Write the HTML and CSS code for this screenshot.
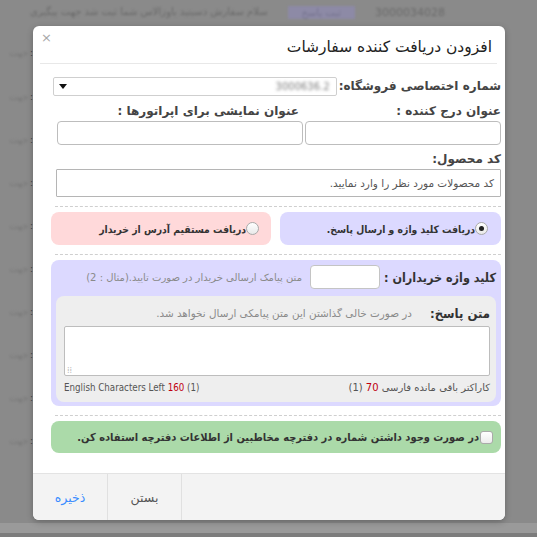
FILE: index.html
```html
<!DOCTYPE html>
<html lang="fa">
<head>
<meta charset="utf-8">
<title>افزودن دریافت کننده سفارشات</title>
<link rel="stylesheet" href="styles.css">
</head>
<body>
<div class="backdrop">
  <div class="bg-row bg-top">
    <span class="bg-num">3000034028</span>
    <span class="bg-pill">ثبت پاسخ</span>
    <span class="bg-text">سلام سفارش دسبتید باوزالاس شما ثبت شد جهت پیگیری</span>
  </div>
  <div class="bg-row"><span class="bg-faint">جهت</span><span class="bg-dots">:</span></div>
  <div class="bg-row"><span class="bg-faint">جهت</span><span class="bg-dots">:</span></div>
  <div class="bg-row"><span class="bg-faint">جهت</span><span class="bg-dots">:</span></div>
  <div class="bg-row"><span class="bg-faint">جهت</span><span class="bg-dots">:</span></div>
  <div class="bg-row"><span class="bg-faint">جهت</span><span class="bg-dots">:</span></div>
  <div class="bg-row"><span class="bg-faint">جهت</span><span class="bg-dots">:</span></div>
  <div class="bg-row"><span class="bg-faint">جهت</span><span class="bg-dots">:</span></div>
  <div class="bg-row"><span class="bg-faint">جهت</span><span class="bg-dots">:</span></div>
  <div class="bg-row"><span class="bg-faint">جهت</span><span class="bg-dots">:</span></div>
  <div class="bg-row"><span class="bg-faint">جهت</span><span class="bg-dots">:</span></div>
  <div class="bg-bottom"></div>
</div>

<div class="modal" dir="rtl">
  <div class="modal-header">
    <span class="close">×</span>
    <h4 class="title">افزودن دریافت کننده سفارشات</h4>
  </div>

  <div class="modal-body">
    <div class="row-store">
      <label class="lbl">شماره اختصاصی فروشگاه:</label>
      <div class="select">
        <span class="select-val">3000636.2</span>
        <span class="select-arrow"></span>
      </div>
    </div>

    <div class="row-two">
      <div class="col">
        <label class="lbl">عنوان درج کننده :</label>
        <div class="input"></div>
      </div>
      <div class="col">
        <label class="lbl">عنوان نمایشی برای اپراتورها :</label>
        <div class="input"></div>
      </div>
    </div>

    <label class="lbl lbl-code">کد محصول:</label>
    <div class="input input-code"><span class="ph">کد محصولات مورد نظر را وارد نمایید.</span></div>

    <div class="dash"></div>

    <div class="choices">
      <div class="choice choice-purple">
        <span class="radio checked"></span>
        <span class="choice-text radio-text">دریافت کلید واژه و ارسال پاسخ.</span>
      </div>
      <div class="choice choice-pink">
        <span class="radio"></span>
        <span class="choice-text radio-text">دریافت مستقیم آدرس از خریدار</span>
      </div>
    </div>

    <div class="dash"></div>

    <div class="keyword-box">
      <div class="kw-row">
        <span class="kw-label">کلید واژه خریداران :</span>
        <div class="input kw-input"></div>
        <span class="hint">متن پیامک ارسالی خریدار در صورت تایید.(مثال : 2)</span>
      </div>
      <div class="reply-box">
        <div class="reply-head">
          <span class="reply-label">متن پاسخ:</span>
          <span class="hint hint-reply">در صورت خالی گذاشتن این متن پیامکی ارسال نخواهد شد.</span>
        </div>
        <div class="textarea"><span class="grip">⁞⁞</span></div>
        <div class="counters">
          <span class="cnt">کاراکتر باقی مانده فارسی <b class="red">70</b> (1)</span>
          <span class="cnt cnt-en" dir="ltr">English Characters Left <b class="red">160</b> (1)</span>
        </div>
      </div>
    </div>

    <div class="dash"></div>

    <div class="green-box">
      <span class="checkbox"></span>
      <span class="choice-text">در صورت وجود داشتن شماره در دفترچه مخاطبین از اطلاعات دفترچه استفاده کن.</span>
    </div>
  </div>

  <div class="modal-footer">
    <span class="btn btn-save">ذخیره</span>
    <span class="btn btn-close">بستن</span>
  </div>
</div>
</body>
</html>
```

FILE: styles.css
```css
* { box-sizing: border-box; }

html, body {
  margin: 0;
  padding: 0;
  width: 537px;
  height: 537px;
  overflow: hidden;
}

body {
  background: #8a8a8a;
  font-family: "DejaVu Sans", sans-serif;
  position: relative;
}

/* ---------- backdrop page (dimmed) ---------- */
.backdrop {
  display: flex;
  flex-direction: column;
  height: 537px;
}

.bg-row {
  height: 43px;
  display: flex;
  align-items: center;
  padding: 0 0 0 2px;
  font-size: 10px;
  color: #6e6e6e;
  flex-shrink: 0;
  gap: 2px;
}

.bg-row:nth-child(2) { height: 45px; }

.bg-top {
  direction: rtl;
  height: 30px;
  align-items: flex-start;
  padding: 6px 92px 0 0;
  gap: 20px;
  filter: blur(0.9px);
}

.bg-text { color: #6a6a6a; font-size: 10px; }
.bg-pill {
  background: #8d8aa6;
  color: #76748f;
  padding: 1px 14px;
  font-size: 10px;
}
.bg-num { color: #6a6a6a; font-size: 11px; }

.bg-dots {
  color: #444;
  font-size: 9px;
}

.bg-faint {
  width: 26px;
  color: #787878;
  font-size: 9px;
  filter: blur(0.8px);
  text-align: right;
}

.bg-bottom {
  margin-top: auto;
  height: 14px;
  background: #9a9a9a;
  border-bottom: 4px solid #7c7c7c;
}

/* ---------- modal ---------- */
.modal {
  position: absolute;
  left: 33px;
  top: 26px;
  width: 472px;
  height: 494px;
  background: #fff;
  border-radius: 6px;
  display: flex;
  flex-direction: column;
  overflow: hidden;
  box-shadow: 0 2px 6px rgba(0,0,0,0.25);
  color: #333;
}

.modal-header {
  margin: 0 8px 0 7px;
  padding: 9px 5px 3px;
  border-bottom: 1px solid #e8e8e8;
  position: relative;
}

.close {
  position: absolute;
  left: 1px;
  top: 5px;
  color: #a8a8a8;
  font-size: 13px;
  line-height: 14px;
}

.title {
  margin: 0;
  font-weight: normal;
  font-size: 15.5px;
  line-height: 25px;
  color: #222;
}

.modal-body {
  padding: 11px 4px 0 18px;
  flex: 1;
}

.lbl {
  display: block;
  font-weight: bold;
  font-size: 12px;
  line-height: 16px;
  color: #444;
  white-space: nowrap;
}

.row-store {
  display: flex;
  align-items: center;
  gap: 2px;
  height: 22px;
}

.select {
  width: 284px;
  height: 19px;
  border: 1px solid #cfcfcf;
  border-radius: 2px;
  display: flex;
  justify-content: space-between;
  align-items: center;
  padding: 0 6px 0 5px;
  background: #fff;
}

.select-val {
  font-size: 10px;
  color: #7d7d7d;
  filter: blur(1.4px);
  direction: ltr;
}

.select-arrow {
  width: 0;
  height: 0;
  border-left: 4px solid transparent;
  border-right: 4px solid transparent;
  border-top: 5px solid #111;
}

.row-two {
  display: flex;
  gap: 2px;
  margin-top: 5px;
  margin-left: 6px;
}

.row-two .col {
  display: flex;
  flex-direction: column;
}
.row-two .col:first-child { width: 196px; }
.row-two .col:last-child { flex: 1; }
.row-two .col .lbl { line-height: 18px; }
.row-two .col:last-child .lbl { padding-right: 4px; }

.input {
  height: 24px;
  border: 1px solid #bdbdbd;
  border-radius: 4px;
  background: #fff;
}
.row-two .input { margin-top: 1px; }

.lbl-code {
  margin-top: 5px;
  line-height: 18px;
}

.input-code {
  height: 28px;
  margin-top: 1px;
  margin-left: 5px;
  border-radius: 1px;
  border-color: #b5b5b5;
  display: flex;
  align-items: center;
  padding-right: 6px;
}

.ph {
  font-size: 10.5px;
  color: #555;
}

.dash {
  border-top: 1px dashed #cfcfcf;
  margin: 9px 0 5px 4px;
}

.choices {
  display: flex;
  gap: 9px;
}

.choice {
  flex: 1;
  height: 33px;
  border-radius: 8px;
  display: flex;
  align-items: center;
  padding-right: 13px;
}

.choice-purple { background: #dcd9ff; }
.choice-pink { background: #ffd9da; padding-right: 12px; }

.radio {
  width: 13px;
  height: 13px;
  border-radius: 50%;
  border: 1px solid #a9a9a9;
  background: linear-gradient(#fff, #e9e9e9);
  position: relative;
  flex-shrink: 0;
}

.radio.checked::after {
  content: "";
  position: absolute;
  left: 3px;
  top: 3px;
  width: 5px;
  height: 5px;
  border-radius: 50%;
  background: #222;
}

.choice-text {
  font-family: "DejaVu Sans Condensed", "DejaVu Sans", sans-serif;
  font-stretch: condensed;
  font-size: 11px;
  font-weight: bold;
  color: #333;
  white-space: nowrap;
}

.radio-text { font-size: 10.3px; }

.keyword-box {
  background: #dcd9ff;
  border-radius: 8px;
  padding: 5px;
  height: 146px;
}

.kw-row {
  display: flex;
  align-items: center;
  height: 24px;
}

.kw-label {
  font-family: "DejaVu Sans Condensed", "DejaVu Sans", sans-serif;
  font-stretch: condensed;
  font-size: 12.5px;
  font-weight: bold;
  color: #333;
  white-space: nowrap;
}

.kw-input {
  width: 70px;
  height: 24px;
  margin-right: 4px;
  border-color: #c4c4c4;
}

.hint {
  font-size: 10px;
  color: #8a8a8a;
  white-space: nowrap;
  margin-right: 8px;
}

.reply-box {
  margin-top: 7px;
  background: #eeeeee;
  border-radius: 8px;
  padding: 8px 6px 6px 8px;
  height: 106px;
}

.reply-head {
  display: flex;
  align-items: center;
  height: 18px;
}

.reply-label {
  font-family: "DejaVu Sans Condensed", "DejaVu Sans", sans-serif;
  font-stretch: condensed;
  font-size: 13px;
  font-weight: bold;
  color: #333;
}

.hint-reply {
  font-size: 10.4px;
  margin-right: 18px;
}

.textarea {
  margin-top: 4px;
  height: 50px;
  background: #fff;
  border: 1px solid #bdbdbd;
  border-radius: 2px;
  position: relative;
}

.grip {
  position: absolute;
  left: 2px;
  bottom: 0;
  font-size: 8px;
  color: #bbb;
  line-height: 9px;
}

.counters {
  display: flex;
  justify-content: space-between;
  margin-top: 6px;
  font-size: 10px;
  color: #555;
}

.cnt-en {
  font-family: "DejaVu Sans Condensed", "DejaVu Sans", sans-serif;
  font-stretch: condensed;
  font-size: 9.7px;
}

.cnt b { font-weight: normal; }
.red { color: #c0000f; }

.green-box {
  background: #abdaa9;
  border-radius: 8px;
  height: 32px;
  display: flex;
  align-items: center;
  padding-right: 8px;
  gap: 1px;
  margin-top: 0;
}

.checkbox {
  width: 13px;
  height: 13px;
  border: 1px solid #aaa;
  border-radius: 3px;
  background: linear-gradient(#fff, #ececec);
  flex-shrink: 0;
}

.modal-footer {
  height: 47px;
  background: #f3f3f3;
  border-top: 1px solid #e3e3e3;
  display: flex;
  direction: ltr;
}

.btn {
  display: flex;
  align-items: center;
  justify-content: center;
  font-size: 12.5px;
  border-right: 1px solid #e0e0e0;
}

.btn-save {
  width: 75px;
  color: #3a8dff;
}

.btn-close {
  width: 74px;
  color: #555;
}
```
